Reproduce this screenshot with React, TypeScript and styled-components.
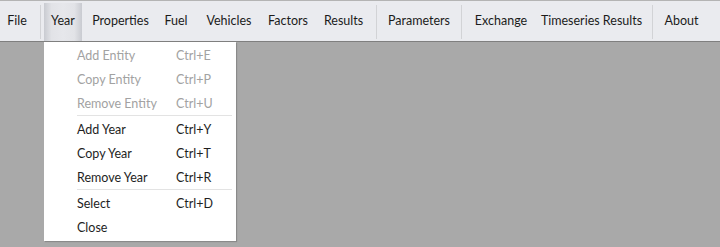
import React from "react";
import styled, { createGlobalStyle } from "styled-components";

const GlobalStyle = createGlobalStyle`
  html, body {
    margin: 0;
    padding: 0;
    background: #a9a9a9;
    font-family: Lato, "Open Sans", sans-serif;
    font-size: 12.5px;
  }
`;

const Window = styled.div`
  width: 720px;
  height: 247px;
  position: relative;
  overflow: hidden;
  background: #a9a9a9;
`;

const MenuBar = styled.div`
  display: flex;
  align-items: stretch;
  height: 40px;
  background: #eaebef;
  border-top: 1px solid #b4b4b4;
  border-bottom: 1px solid #7f7f7f;
`;

const MenuItem = styled.div<{ $w: number; $active?: boolean }>`
  display: flex;
  align-items: center;
  justify-content: center;
  flex: none;
  width: ${(p) => p.$w}px;
  margin-top: 2px;
  padding-bottom: 4px;
  color: #1b1b1b;
  white-space: nowrap;
  background: ${(p) =>
    p.$active
      ? "linear-gradient(90deg, #c9cbd1 0%, #e2e3e7 20%, #e6e7eb 50%, #e2e3e7 80%, #c9cbd1 100%)"
      : "transparent"};
`;

const Divider = styled.div<{ $ml: number; $mr: number }>`
  flex: none;
  width: 1px;
  margin: 4px ${(p) => p.$mr}px 2px ${(p) => p.$ml}px;
  background: #d2d3d6;
`;

const Dropdown = styled.div`
  position: absolute;
  left: 44px;
  top: 42px;
  width: 192px;
  padding: 1px 0 2px;
  background: #ffffff;
  box-shadow: 1px 1px 1px rgba(0, 0, 0, 0.18);
`;

const Entry = styled.div<{ $disabled?: boolean }>`
  display: flex;
  align-items: center;
  height: 24px;
  padding-left: 33px;
  color: ${(p) => (p.$disabled ? "#a2a2a2" : "#1e1e1e")};
`;

const Label = styled.span`
  width: 99px;
`;

const Shortcut = styled.span``;

const Separator = styled.div`
  height: 1px;
  margin: 0 4px 1px 33px;
  background: #e3e3e3;
`;

const menus: { label: string; w: number; div?: [number, number] }[] = [
  { label: "File", w: 34 },
  { label: "Year", w: 38, div: [6, 3] },
  { label: "Properties", w: 77 },
  { label: "Fuel", w: 34 },
  { label: "Vehicles", w: 72 },
  { label: "Factors", w: 46 },
  { label: "Results", w: 65 },
  { label: "Parameters", w: 84, div: [0, 0] },
  { label: "Exchange", w: 78, div: [0, 0] },
  { label: "Timeseries Results", w: 103 },
  { label: "About", w: 57, div: [9, 0] },
];

const groups = [
  [
    { label: "Add Entity", key: "Ctrl+E", disabled: true },
    { label: "Copy Entity", key: "Ctrl+P", disabled: true },
    { label: "Remove Entity", key: "Ctrl+U", disabled: true },
  ],
  [
    { label: "Add Year", key: "Ctrl+Y" },
    { label: "Copy Year", key: "Ctrl+T" },
    { label: "Remove Year", key: "Ctrl+R" },
  ],
  [
    { label: "Select", key: "Ctrl+D" },
    { label: "Close", key: "" },
  ],
];

export default function App() {
  return (
    <Window>
      <GlobalStyle />
      <MenuBar>
        {menus.map((m) => (
          <React.Fragment key={m.label}>
            {m.div && <Divider $ml={m.div[0]} $mr={m.div[1]} />}
            <MenuItem $w={m.w} $active={m.label === "Year"}>
              {m.label}
            </MenuItem>
          </React.Fragment>
        ))}
      </MenuBar>
      <Dropdown>
        {groups.map((g, gi) => (
          <React.Fragment key={gi}>
            {gi > 0 && <Separator />}
            {g.map((e) => (
              <Entry key={e.label} $disabled={"disabled" in e && e.disabled}>
                <Label>{e.label}</Label>
                <Shortcut>{e.key}</Shortcut>
              </Entry>
            ))}
          </React.Fragment>
        ))}
      </Dropdown>
    </Window>
  );
}
